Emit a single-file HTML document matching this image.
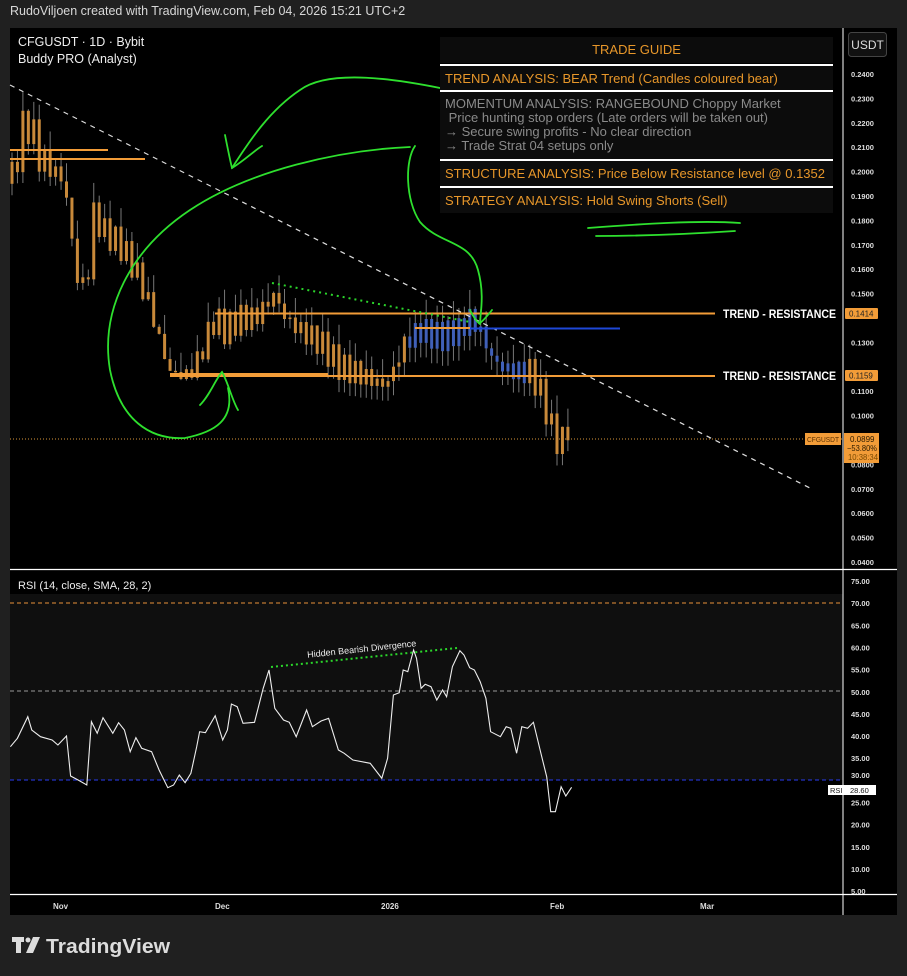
<!DOCTYPE html>
<html><head><meta charset="utf-8"><style>
body{margin:0;background:#202020;width:907px;height:976px;overflow:hidden;font-family:"Liberation Sans",sans-serif;}
#hdr{position:absolute;left:10px;top:4px;color:#d8d8d8;font-size:12.5px;}
#chart{position:absolute;left:10px;top:28px;width:887px;height:887px;background:#000;}
.tg{position:absolute;left:440px;width:393px;background:#0c0c0c;font-size:13px;color:#e8972a;box-sizing:border-box;padding-left:5px;}
</style></head><body>
<div id="hdr">RudoViljoen created with TradingView.com, Feb 04, 2026 15:21 UTC+2</div>
<div id="chart"></div>
<svg id="s" width="907" height="976" style="position:absolute;left:0;top:0" font-family="Liberation Sans, sans-serif">
<rect x="10" y="594" width="833" height="186" fill="#0f0f0f"/>
<line x1="843" y1="28" x2="843" y2="915" stroke="#fff" stroke-width="1"/>
<line x1="10" y1="569.5" x2="897" y2="569.5" stroke="#fff" stroke-width="1.2"/>
<line x1="10" y1="894.5" x2="897" y2="894.5" stroke="#fff" stroke-width="1.2"/>
<line x1="10" y1="603" x2="843" y2="603" stroke="#e8913a" stroke-dasharray="4,3"/>
<line x1="10" y1="691" x2="843" y2="691" stroke="#999" stroke-dasharray="4,3"/>
<line x1="10" y1="780" x2="843" y2="780" stroke="#2a3cf0" stroke-dasharray="4,3"/>
<line x1="10" y1="439" x2="843" y2="439" stroke="#d9963a" stroke-dasharray="1,2"/>
<g id="cd"></g>
<line x1="10" y1="85" x2="810" y2="488" stroke="#ddd" stroke-width="1.2" stroke-dasharray="5,5"/>
<g stroke="#f29c38" stroke-width="2">
<line x1="10" y1="150" x2="108" y2="150"/><line x1="10" y1="159" x2="145" y2="159"/>
<line x1="215" y1="313.5" x2="715" y2="313.5"/><line x1="175" y1="376" x2="715" y2="376"/>
<line x1="415" y1="328" x2="470" y2="328"/></g>
<line x1="170" y1="375" x2="328" y2="375" stroke="#f29c38" stroke-width="4"/>
<line x1="470" y1="328.5" x2="620" y2="328.5" stroke="#1e48d8" stroke-width="2"/>
<line x1="272" y1="283" x2="470" y2="322" stroke="#2bd62b" stroke-width="2" stroke-dasharray="2,4"/>
<g fill="none" stroke="#2ee02e" stroke-width="1.8" stroke-linecap="round">
<path d="M440,88 C400,80 330,68 300,90 C270,110 250,140 232,168"/>
<path d="M225,135 C228,150 230,160 232,168 C245,160 255,150 262,146"/>
<path d="M410,147 C340,150 250,170 190,210 C130,250 100,310 110,370 C120,420 150,440 185,438 C215,432 235,420 228,388"/>
<path d="M200,405 C210,395 215,380 222,372 C228,382 232,400 238,410"/>
<path d="M415,146 C405,160 405,200 420,222 C440,245 470,240 478,270 C485,295 480,315 480,323 C484,320 488,315 492,310"/>
<path d="M470,310 C474,318 477,322 480,324"/>
<path d="M588,228 C640,224 700,220 740,223"/>
<path d="M596,236 C640,236 690,234 735,231"/>
</g>
<polyline id="rsi" fill="none" stroke="#eee" stroke-width="1.1"/>
<line x1="271" y1="667" x2="457" y2="648" stroke="#2bd62b" stroke-width="2" stroke-dasharray="2,3"/>
<text x="362" y="652" fill="#eee" font-size="9" text-anchor="middle" transform="rotate(-6 362 652)">Hidden Bearish Divergence</text>
<g fill="#fff" font-size="11.5" font-weight="bold"><text x="723" y="318" textLength="113" lengthAdjust="spacingAndGlyphs">TREND - RESISTANCE</text><text x="723" y="380" textLength="113" lengthAdjust="spacingAndGlyphs">TREND - RESISTANCE</text></g>
<g id="ax" fill="#ddd" font-size="7.5" font-weight="bold"></g>
<rect x="845" y="308" width="33" height="11" fill="#f29c38" rx="1"/><text x="849" y="316.5" font-size="8" fill="#222">0.1414</text>
<rect x="845" y="370" width="33" height="11" fill="#f29c38" rx="1"/><text x="849" y="378.5" font-size="8" fill="#222">0.1159</text>
<rect x="805" y="433" width="36" height="12" fill="#f29c38"/><text x="807" y="442" font-size="7.5" fill="#5a3000" textLength="32" lengthAdjust="spacingAndGlyphs">CFGUSDT</text>
<rect x="844" y="433" width="35" height="30" fill="#f29c38"/>
<g font-size="8" fill="#2a1a00"><text x="850" y="442">0.0899</text><text x="847" y="451" textLength="30" lengthAdjust="spacingAndGlyphs">−53.80%</text><text x="848" y="460" fill="#7a4a00" textLength="30" lengthAdjust="spacingAndGlyphs">10:38:34</text></g>
<rect x="828" y="785" width="48" height="10" fill="#fff"/><text x="830" y="793" font-size="7.5" fill="#111">RSI</text><text x="850" y="793" font-size="7.5" fill="#111">28.60</text>
<g fill="#ddd" font-size="8" font-weight="bold"><text x="53" y="909">Nov</text><text x="215" y="909">Dec</text><text x="381" y="909">2026</text><text x="550" y="909">Feb</text><text x="700" y="909">Mar</text></g>
<rect x="848.5" y="32.5" width="38" height="24" rx="3" fill="#111" stroke="#444"/>
<text x="867.5" y="49" fill="#ddd" font-size="12" text-anchor="middle">USDT</text>
<text x="18" y="46" fill="#eee" font-size="12.5">CFGUSDT · 1D · Bybit</text>
<text x="18" y="63" fill="#eee" font-size="12.5">Buddy PRO (Analyst)</text>
<text x="18" y="589" fill="#eee" font-size="11">RSI (14, close, SMA, 28, 2)</text>
<rect x="897" y="28" width="10" height="887" fill="#202020"/>
<g fill="#dcdcdc"><rect x="12" y="937" width="12" height="5"/><rect x="16" y="937" width="5" height="16"/><circle cx="28" cy="940" r="2.5"/><path d="M33,937 H40 L33,953 H26 Z"/></g>
<text x="46" y="953" fill="#dcdcdc" font-size="20" font-weight="bold" textLength="124" lengthAdjust="spacingAndGlyphs">TradingView</text>
</svg>
<div class="tg" style="top:37px;height:26px;text-align:center;line-height:25px;padding:0">TRADE GUIDE</div>
<div class="tg" style="top:64px;height:26px;line-height:25px;border-top:2px solid #fff">TREND ANALYSIS: BEAR Trend (Candles coloured bear)</div>
<div class="tg" style="top:90px;height:69px;border-top:2px solid #fff;color:#8a8a8a;line-height:14px;padding-top:5px;white-space:pre">MOMENTUM ANALYSIS: RANGEBOUND Choppy Market
 Price hunting stop orders (Late orders will be taken out)
→ Secure swing profits - No clear direction
→ Trade Strat 04 setups only</div>
<div class="tg" style="top:159px;height:27px;line-height:25px;border-top:2px solid #fff">STRUCTURE ANALYSIS: Price Below Resistance level @ 0.1352</div>
<div class="tg" style="top:186px;height:27px;line-height:25px;border-top:2px solid #fff">STRATEGY ANALYSIS: Hold Swing Shorts (Sell)</div>
<script>
var Y=p=>74+(0.24-p)*2440;
var kp=[[12,.195],[20,.215],[30,.22],[40,.205],[55,.2],[65,.195],[75,.16],[85,.15],[95,.185],[105,.175],[120,.17],[135,.16],[150,.145],[160,.13],[170,.118],[185,.116],[195,.12],[205,.13],[215,.14],[225,.135],[240,.14],[255,.14],[265,.145],[275,.15],[285,.14],[300,.135],[320,.13],[340,.12],[360,.117],[385,.112],[395,.12],[405,.13],[420,.135],[440,.132],[460,.135],[470,.14],[480,.135],[490,.125],[500,.12],[515,.118],[530,.118],[540,.11],[548,.1],[555,.09],[565,.09],[572,.0899]];
function f(x){for(var i=1;i<kp.length;i++)if(x<=kp[i][0]){var a=kp[i-1],b=kp[i];return a[1]+(b[1]-a[1])*(x-a[0])/(b[0]-a[0]);}return .0899;}
var h='',prev=f(12);
for(var x=12;x<=572;x+=5.45){var n=Math.sin(x*1.7)*0.006*(x<100?1.5:1);var c=f(x)+n;if(x>566)c=.0899;var o=prev;prev=c;
var hi=Math.max(o,c)+Math.abs(Math.sin(x*3.1))*0.008,lo=Math.min(o,c)-Math.abs(Math.cos(x*2.3))*0.006;
var col=(x>405&&x<525)?'#4060b8':'#c8893a';
h+='<line x1="'+x+'" x2="'+x+'" y1="'+Y(hi)+'" y2="'+Y(lo)+'" stroke="#777" stroke-width="1"/>';
var t=Math.min(Y(o),Y(c)),bh=Math.max(1.5,Math.abs(Y(o)-Y(c)));
h+='<rect x="'+(x-1.5)+'" y="'+t+'" width="3" height="'+bh+'" fill="'+col+'"/>';}
document.getElementById('cd').innerHTML=h;
var r=[[18,560],[30,535],[48,470],[55,510],[70,530],[90,540],[100,555],[115,528],[122,648],[135,660],[150,675],[158,485],[168,520],[178,473],[195,520],[205,488],[215,510],[225,575],[235,533],[245,565],[262,575],[275,630],[290,683],[300,675],[310,645],[320,668],[330,640],[340,560],[345,515],[355,518],[372,467],[385,540],[393,510],[400,432],[410,440],[420,490],[440,487],[455,385],[465,330],[475,445],[490,480],[500,487],[512,530],[530,450],[540,500],[555,483],[568,475],[585,570],[595,580],[610,600],[640,610],[660,655],[670,595],[680,405],[690,398],[697,330],[705,335],[715,270],[720,295],[728,385],[735,373],[745,380],[755,420],[765,390],[772,410],[782,320],[795,272],[802,285],[812,323],[820,330],[830,365],[840,415],[848,515],[865,530],[875,500],[883,505],[893,580],[902,500],[912,505],[922,487],[935,580],[945,650],[952,755],[960,755],[970,680],[978,708],[988,682]];
document.getElementById('rsi').setAttribute('points',r.map(p=>(p[0]*0.5785).toFixed(1)+','+(560+p[1]/3).toFixed(1)).join(' '));
var a='';for(var i=24;i>=4;i--){var p=i/100;if(i==14||i==12)continue;a+='<text x="851" y="'+(Y(p)+3)+'">'+p.toFixed(4)+'</text>';}
for(var v=75;v>=5;v-=5){if(v==30)continue;a+='<text x="851" y="'+(581+(75-v)*4.43+3)+'">'+v.toFixed(2)+'</text>';}
a+='<text x="851" y="778">30.00</text>';
document.getElementById('ax').innerHTML=a;
</script>
</body></html>
